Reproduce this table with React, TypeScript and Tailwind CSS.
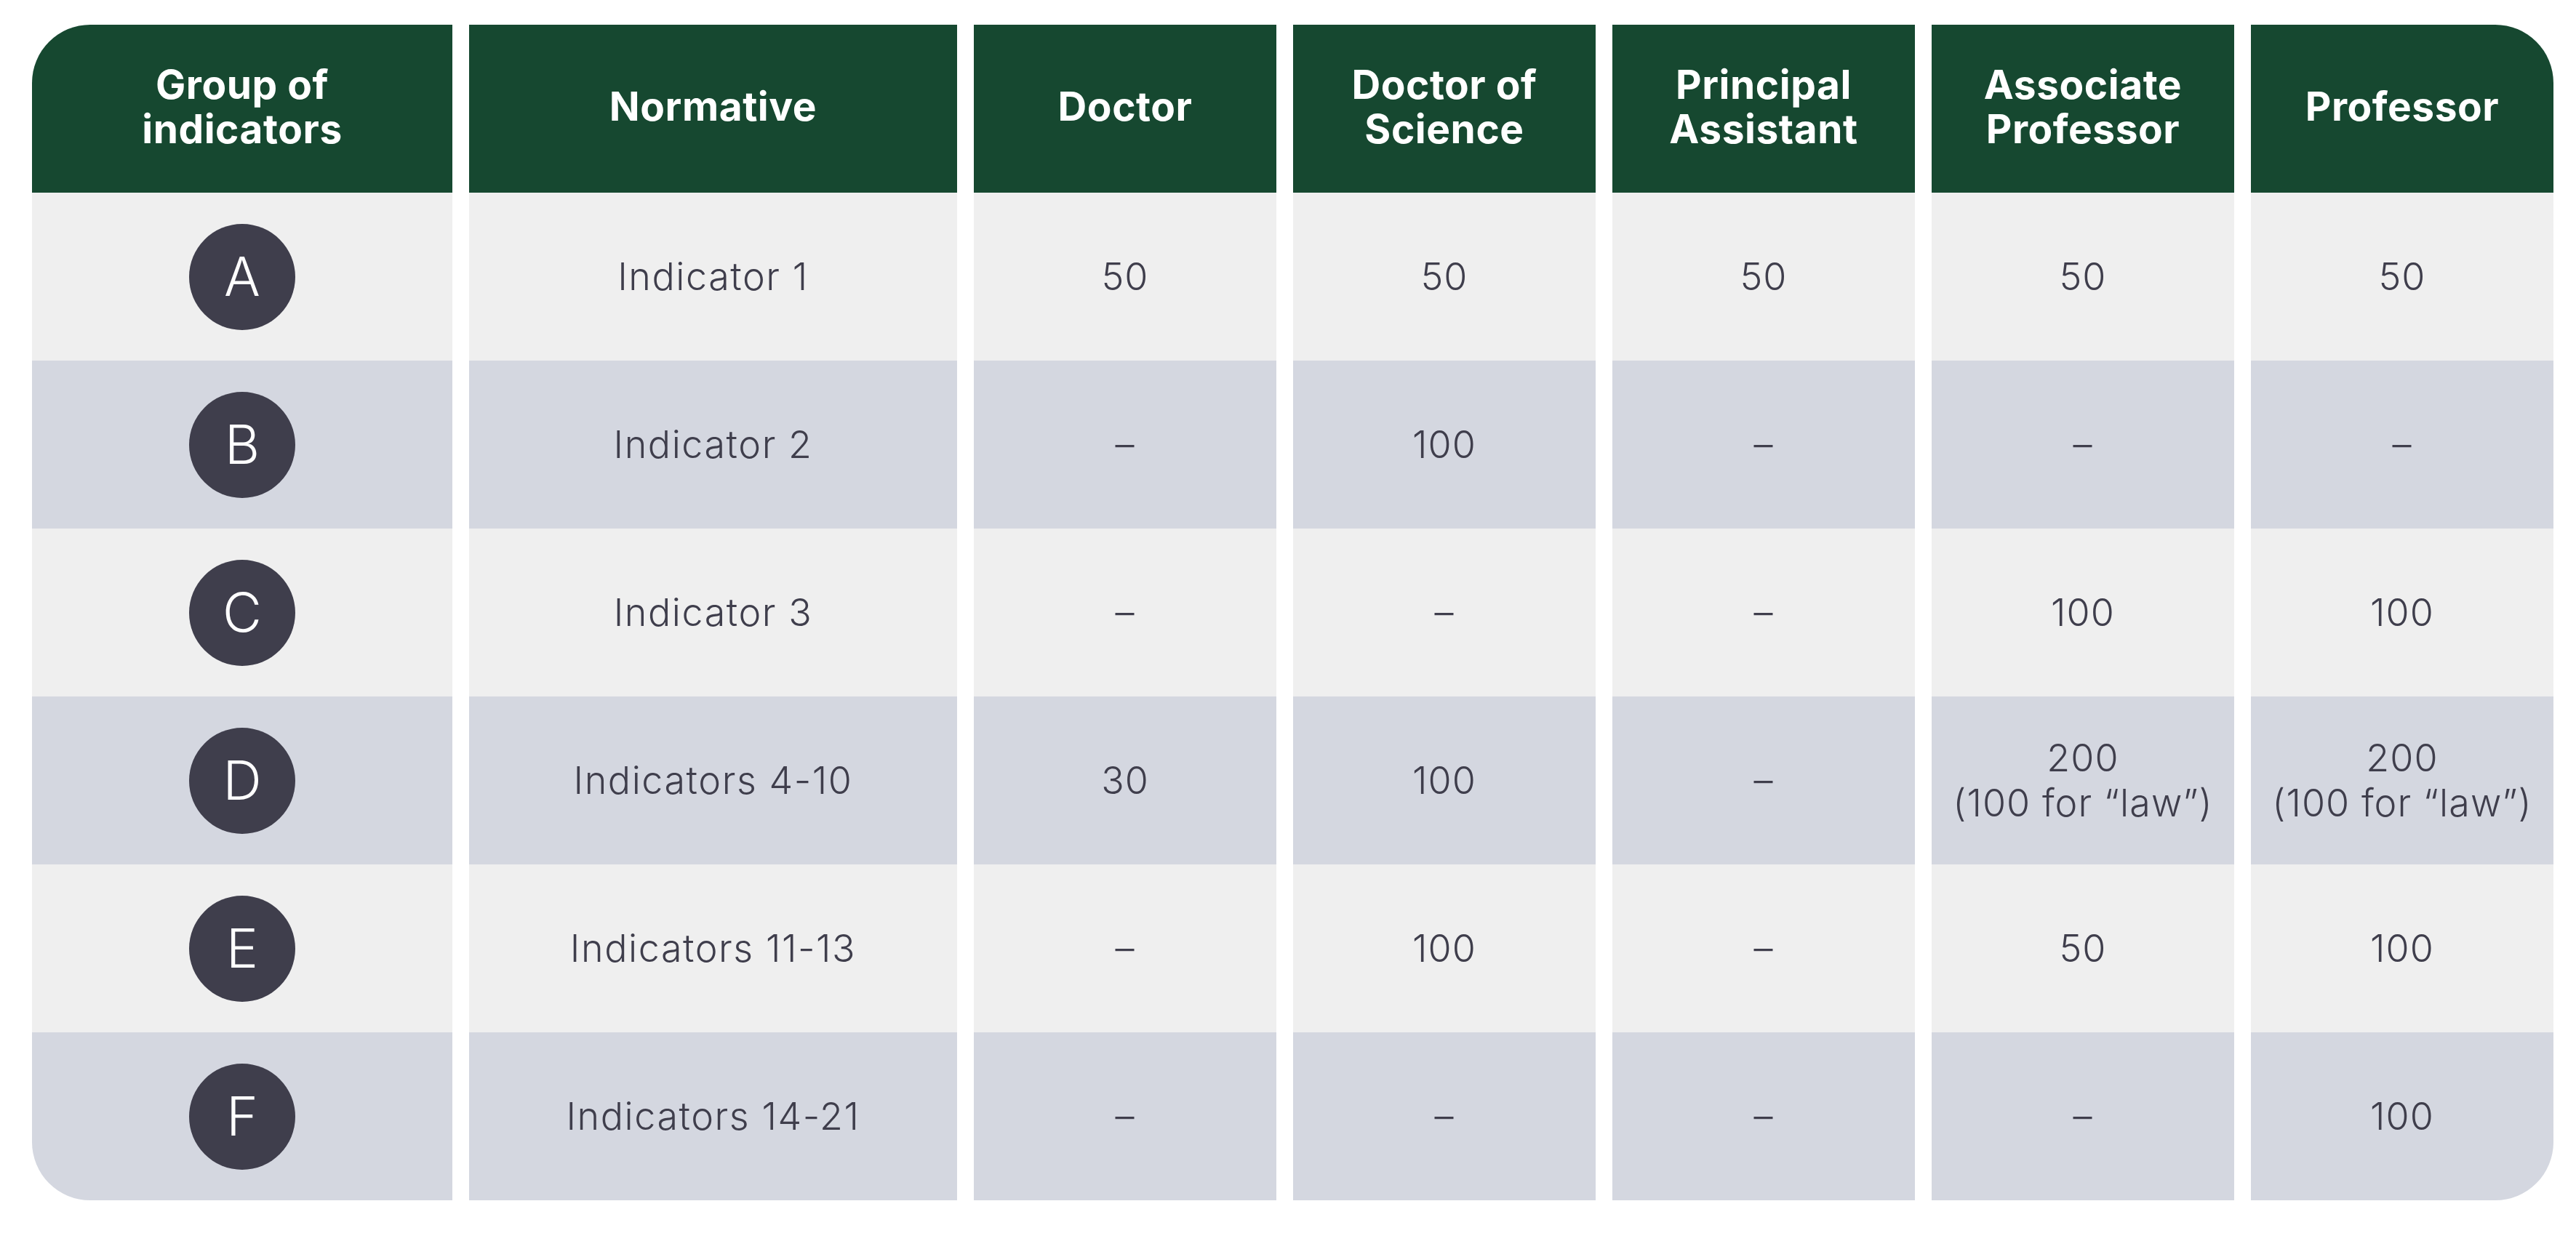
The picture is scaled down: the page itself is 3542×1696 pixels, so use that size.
import React from "react";

const headers: React.ReactNode[] = [
  <>Group of<br />indicators</>,
  <>Normative</>,
  <>Doctor</>,
  <>Doctor of<br />Science</>,
  <>Principal<br />Assistant</>,
  <>Associate<br />Professor</>,
  <>Professor</>,
];

const rows: { letter: string; name: string; vals: React.ReactNode[] }[] = [
  { letter: "A", name: "Indicator 1", vals: ["50", "50", "50", "50", "50"] },
  { letter: "B", name: "Indicator 2", vals: ["–", "100", "–", "–", "–"] },
  { letter: "C", name: "Indicator 3", vals: ["–", "–", "–", "100", "100"] },
  {
    letter: "D",
    name: "Indicators 4-10",
    vals: [
      "30",
      "100",
      "–",
      <>200<br />(100 for “law”)</>,
      <>200<br />(100 for “law”)</>,
    ],
  },
  { letter: "E", name: "Indicators 11-13", vals: ["–", "100", "–", "50", "100"] },
  { letter: "F", name: "Indicators 14-21", vals: ["–", "–", "–", "–", "100"] },
];

export default function App() {
  return (
    <div
      className="w-[3542px] h-[1696px] bg-white pl-[44px] pt-[34px]"
      style={{ fontFamily: "Inter, 'Open Sans', sans-serif" }}
    >
      <div className="grid grid-cols-[578px_671px_416px_416px_416px_416px_416px] gap-x-[23px] auto-rows-[231px]">
        {headers.map((h, i) => (
          <div
            key={"h" + i}
            className={
              "flex items-center justify-center bg-[#164830] text-white text-center font-bold text-[55px] leading-[61px] tracking-[0.01em] pb-[6px] " +
              (i === 0 ? "rounded-tl-[80px]" : "") +
              (i === 6 ? "rounded-tr-[80px]" : "")
            }
          >
            <span>{h}</span>
          </div>
        ))}
        {rows.map((r, ri) => {
          const bg = ri % 2 === 0 ? "bg-[#efefef]" : "bg-[#d4d7e0]";
          const last = ri === rows.length - 1;
          return (
            <React.Fragment key={r.letter}>
              <div
                className={
                  "flex items-center justify-center " +
                  bg +
                  (last ? " rounded-bl-[80px]" : "")
                }
              >
                <div className="w-[146px] h-[146px] rounded-full bg-[#3f3e4c] flex items-center justify-center text-white font-light text-[74px] leading-none pb-[2px]">
                  {r.letter}
                </div>
              </div>
              <div
                className={
                  "flex items-center justify-center text-[#3f3e4c] font-light text-[52px] tracking-[0.03em] " +
                  bg
                }
              >
                {r.name}
              </div>
              {r.vals.map((v, vi) => (
                <div
                  key={vi}
                  className={
                    "flex items-center justify-center text-center text-[#3f3e4c] font-light text-[52px] leading-[62px] tracking-[0.02em] " +
                    bg +
                    (last && vi === 4 ? " rounded-br-[80px]" : "")
                  }
                >
                  <span>{v}</span>
                </div>
              ))}
            </React.Fragment>
          );
        })}
      </div>
    </div>
  );
}
